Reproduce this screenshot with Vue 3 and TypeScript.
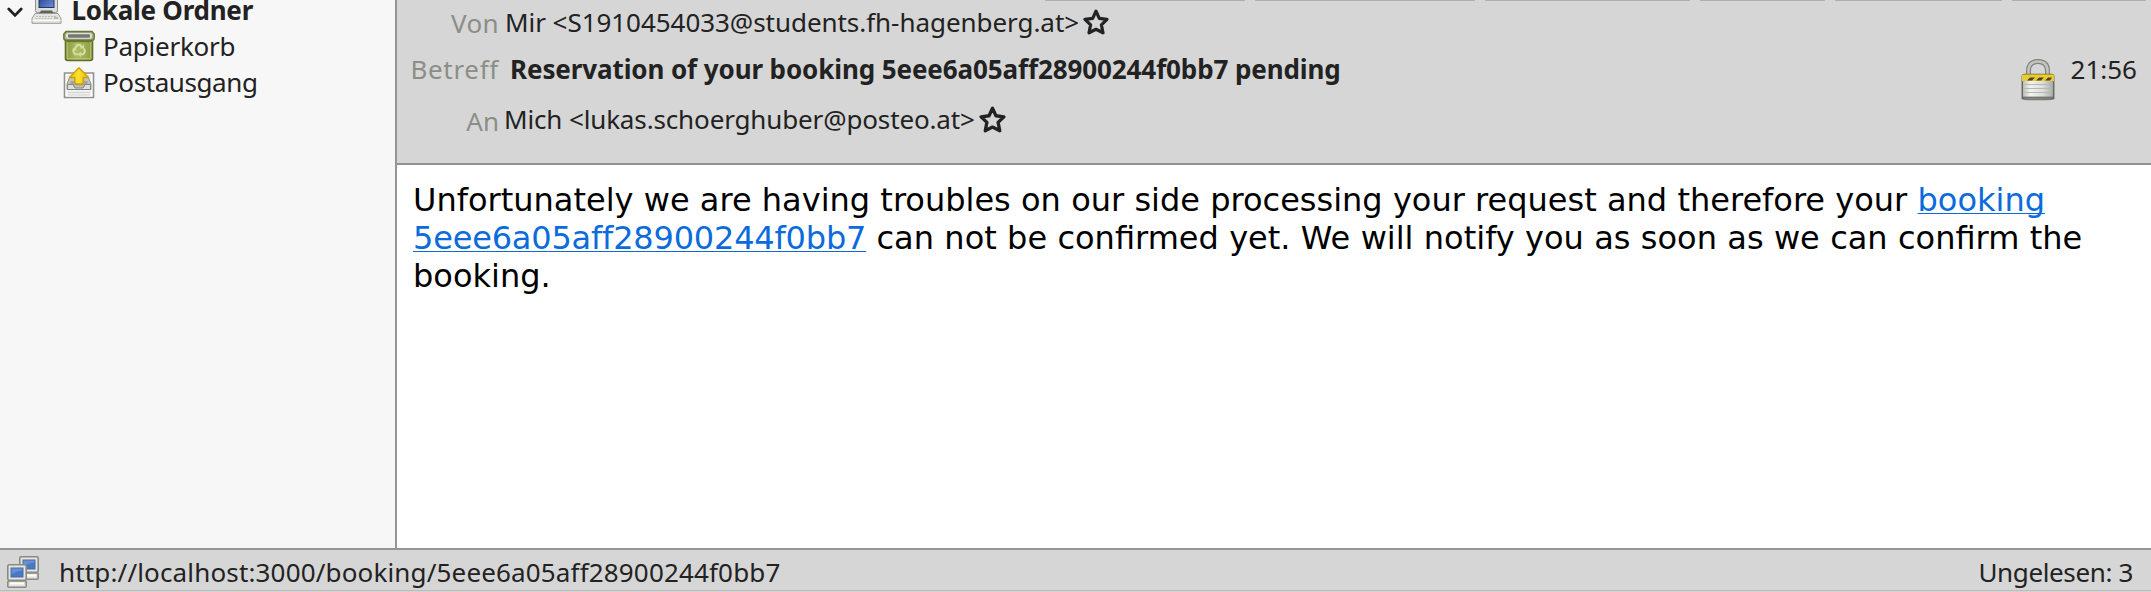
<script setup lang="ts">
const toolbarEdges: number[] = [200, 220, 205, 125, 167, 134]
const star = 'M13 2.2 L16.3 9.4 L24 10.4 L18.4 15.8 L20 23.8 L13 20.3 L6 23.8 L7.6 15.8 L2 10.4 L9.7 9.4 Z'
</script>

<template>
  <div class="window">
    <div class="main">
      <aside class="folders">
        <div class="row root">
          <svg class="chevron" width="16" height="12" viewBox="0 0 16 12">
            <path d="M1.8 2 L8 8.4 L14.2 2" fill="none" stroke="#222" stroke-width="2.8" stroke-linecap="round" stroke-linejoin="round" />
          </svg>
          <svg class="computer" width="32" height="32" viewBox="0 0 32 32">
            <defs>
              <linearGradient id="screen" x1="0" y1="0" x2="1" y2="1">
                <stop offset="0" stop-color="#1c3586" /><stop offset="1" stop-color="#6d91d6" />
              </linearGradient>
            </defs>
            <rect x="4.5" y="-2" width="22" height="22.5" rx="2" fill="#deded9" stroke="#8f908c" />
            <rect x="8" y="1" width="15" height="14.5" fill="url(#screen)" stroke="#23366f" />
            <path d="M10 18.5 H21 L23 22 H8Z" fill="#62635f" />
            <path d="M4 21.5 H27 L30 26.5 V31.3 H1 V26.5Z" fill="#e4e4e0" stroke="#9a9b97" />
            <path d="M5 24.5 H26 M4.5 26.5 H21" stroke="#bcbdb8" stroke-dasharray="2 1" />
            <path d="M1.5 28.3 H29.5" stroke="#fff" />
            <path d="M23 26 H27" stroke="#aaaba6" stroke-width="1.5" />
          </svg>
          <span class="root-name">Lokale Ordner</span>
        </div>
        <div class="row child">
          <svg width="32" height="32" viewBox="0 0 32 32">
            <defs>
              <linearGradient id="bin" x1="0" x2="1" y1="0" y2="0">
                <stop offset="0" stop-color="#8b9b42" /><stop offset=".45" stop-color="#afbd61" /><stop offset="1" stop-color="#8d9c45" />
              </linearGradient>
            </defs>
            <path d="M2.5 9 H29.5 V28.5 Q29.5 30.5 27 30.5 H5 Q2.5 30.5 2.5 28.5Z" fill="url(#bin)" stroke="#5d6c27" stroke-width="1.6" />
            <path d="M4.2 12 V28.7 H27.8 V12" fill="none" stroke="#bdc779" />
            <path d="M3 1.5 H29 L31.2 4 V8 Q31.2 10.2 29 10.2 H3 Q.8 10.2 .8 8 V4Z" fill="#a6b078" stroke="#66743a" stroke-width="1.4" />
            <rect x="3" y="3" width="26" height="5.7" rx="2" fill="#dce0dc" />
            <rect x="5" y="4.3" width="22" height="3.4" rx="1" fill="#717774" />
            <path d="M4 11.4 H28" stroke="#6b7930" stroke-width="1.6" />
            <g fill="none" stroke="#d3dea0" stroke-width="2">
              <path d="M12.1 18.4 L14.2 15.1 H17.2 L19 17.7" />
              <path d="M20.7 18.5 L22 21.2 L20.4 24.3 H17" />
              <path d="M14.8 24.3 H12 L10.2 21.3 L11.2 19.5" />
            </g>
            <path d="M16.5 18.5 H21 V14.5Z M17.9 21.5 V27 L14.8 24.3Z M9 19.2 L12.3 16.7 L13.7 20.8Z" fill="#d3dea0" />
          </svg>
          <span class="bin-name">Papierkorb</span>
        </div>
        <div class="row child">
          <svg class="outbox" width="32" height="32" viewBox="0 0 32 32">
            <defs>
              <linearGradient id="arrow" x1="0" x2="1" y1="0" y2="0">
                <stop offset="0" stop-color="#efc70c" /><stop offset=".5" stop-color="#fce030" /><stop offset="1" stop-color="#e6b800" />
              </linearGradient>
            </defs>
            <path d="M1.5 6 H30.5 V30.5 H1.5Z" fill="#f0f0ee" stroke="#91928e" stroke-width="1.6" />
            <path d="M3.2 7.5 H28.8 V29 H3.2Z" fill="none" stroke="#fff" />
            <path d="M7 9.5 H25 L28 17 V22.5 H4 V17Z" fill="#c1c2be" stroke="#92938e" />
            <path d="M7.5 14 H24.5 V18.5 H7.5Z" fill="#a3a49f" />
            <path d="M4.5 17.5 H10 L12 21 H20 L22 17.5 H27.5 V22.5 H4.5Z" fill="#dededb" stroke="#858681" />
            <path d="M5 25.5 H27 M5 28 H27" stroke="#d1d2ce" />
            <path d="M16 .8 L25.5 10.5 H20.2 V17 H11.8 V10.5 H6.5Z" fill="url(#arrow)" stroke="#cda006" stroke-width="1.3" stroke-linejoin="round" />
          </svg>
          <span class="out-name">Postausgang</span>
        </div>
      </aside>

      <section class="message">
        <header class="head">
          <div class="edges">
            <i v-for="(w, i) in toolbarEdges" :key="i" :style="{ width: w + 'px' }"></i>
          </div>
          <div class="field from">
            <span class="label von">Von</span>
            <span class="value sender">Mir &lt;S1910454033@students.fh-hagenberg.at&gt;</span>
            <svg class="star" width="26" height="26" viewBox="0 0 26 26"><path :d="star" fill="none" stroke="#222" stroke-width="3.2" stroke-linejoin="round" /></svg>
          </div>
          <div class="field subject-row">
            <span class="label betreff">Betreff</span>
            <span class="value subject">Reservation of your booking 5eee6a05aff28900244f0bb7 pending</span>
            <svg class="lock" width="36" height="44" viewBox="0 0 36 44">
              <defs>
                <linearGradient id="metal" x1="0" x2="1" y1="0" y2="0">
                  <stop offset="0" stop-color="#b9bab6" /><stop offset=".25" stop-color="#f2f2ef" /><stop offset=".65" stop-color="#deded9" /><stop offset="1" stop-color="#a7a8a4" />
                </linearGradient>
              </defs>
              <ellipse cx="18" cy="40.5" rx="17.5" ry="2.3" fill="#000" opacity=".14" />
              <path d="M8.5 19 V13 Q8.5 3.5 18 3.5 Q27.5 3.5 27.5 13 V19" fill="none" stroke="#80827c" stroke-width="5" />
              <path d="M8.5 19 V13 Q8.5 3.5 18 3.5 Q27.5 3.5 27.5 13 V19" fill="none" stroke="#c3c4c0" stroke-width="2.6" />
              <rect x="2.3" y="16.5" width="31.4" height="24.5" rx="2" fill="url(#metal)" stroke="#686964" stroke-width="1.5" />
              <path d="M4 26.5 H32 M4 30.5 H32 M4 34.5 H32" stroke="#b7b8b3" />
              <path d="M3 39.4 H33" stroke="#747570" stroke-width="1.6" />
              <rect x="2" y="16" width="32" height="7" fill="#e6cc35" />
              <path d="M2 16.5 H34" stroke="#b49b22" />
              <path d="M7 22.5 L10 19.5 H15 L12 22.5Z M16 22.5 L19 19.5 H24 L21 22.5Z M25 22.5 L28 19.5 H32 L30 22.5Z" fill="#4d461d" />
            </svg>
            <time class="time">21:56</time>
          </div>
          <div class="field to">
            <span class="label an">An</span>
            <span class="value recipient">Mich &lt;lukas.schoerghuber@posteo.at&gt;</span>
            <svg class="star" width="27" height="27" viewBox="0 0 26 26"><path :d="star" fill="none" stroke="#222" stroke-width="3.2" stroke-linejoin="round" /></svg>
          </div>
        </header>
        <article class="body">Unfortunately we are having troubles on our side processing your request and therefore your <a>booking <span class="hash">5eee6a05aff28900244f0bb7</span></a><span class="rest"> can not be confirmed yet. We will notify you as soon as we can confirm the booking.</span></article>
      </section>
    </div>

    <footer class="status">
      <svg class="network" width="32" height="32" viewBox="0 0 32 32">
        <g id="pc">
          <rect x="12.8" y=".8" width="18.4" height="15.4" rx="1.5" fill="#e5e6e1" stroke="#898b83" stroke-width="1.6" />
          <rect x="16" y="4" width="12" height="9" fill="#4a78c4" stroke="#4468ab" />
          <path d="M16.5 4.5 H27.5 V6.5 Q21 7 16.5 10Z" fill="#86a7dc" opacity=".5" />
          <rect x="12.8" y="17" width="18.4" height="6.2" rx="1" fill="#dfe0db" stroke="#898b83" stroke-width="1.6" />
          <path d="M15 19.5 H29" stroke="#fff" stroke-width="2" />
        </g>
        <use href="#pc" x="-12" y="8" />
      </svg>
      <span class="url">http://localhost:3000/booking/5eee6a05aff28900244f0bb7</span>
      <span class="unread">Ungelesen: 3</span>
    </footer>
  </div>
</template>

<style>
body { margin: 0; overflow: hidden; }
</style>

<style scoped>
.window {
  display: flex;
  flex-direction: column;
  width: 2151px;
  height: 592px;
  overflow: hidden;
  box-sizing: border-box;
  background: #fff;
  color: #222;
  font: 26px/36px "Noto Sans", sans-serif;
  white-space: nowrap;
}
svg { display: block; flex: none; }
.main { display: flex; height: 548px; }
.folders {
  box-sizing: border-box;
  width: 397px;
  flex: none;
  border-right: 2px solid #959595;
  background: #f7f7f7;
  overflow: hidden;
}
.row { display: flex; height: 36px; align-items: center; }
.root { margin-top: -8px; padding-left: 7px; font-weight: bold; }
.chevron { margin: 5px 8px 0 0; }
.computer { margin-top: -4px; }
.root-name { margin-left: 8.5px; letter-spacing: -0.24px; }
.child { padding-left: 63px; gap: 8px; }
.outbox { margin-top: 2px; }
.bin-name { letter-spacing: -0.24px; }
.out-name { letter-spacing: -0.41px; }

.message { display: flex; flex-direction: column; flex: 1; min-width: 0; }
.head {
  box-sizing: border-box;
  height: 165px;
  border-bottom: 2px solid #929292;
  background: #d6d6d6;
}
.edges { display: flex; gap: 10px; height: 1px; padding-left: 648px; }
.edges i { flex: none; height: 1px; background: #adadad; border-radius: 1px; }
.field { display: flex; align-items: flex-start; height: 36px; }
.from { margin-top: 3px; }
.subject-row { margin-top: 11px; }
.to { margin-top: 14px; }
.label { width: 102px; text-align: right; color: #8b8e88; flex: none; }
.von { letter-spacing: 0.4px; padding-top: 1px; }
.betreff { letter-spacing: 0.7px; }
.an { padding-top: 2px; }
.value { flex: none; }
.sender { margin-left: 6px; letter-spacing: -0.05px; }
.recipient { margin-left: 5px; letter-spacing: -0.14px; }
.subject { margin-left: 11px; font-weight: bold; letter-spacing: -0.1px; }
.star { margin: 5px 0 0 4px; }
.lock { margin: 7px 15px 0 auto; }
.time { margin-right: 14px; }

.body {
  padding: 16px 16px 0;
  color: #000;
  font: 32px/38px "DejaVu Sans", sans-serif;
  word-spacing: 0.07px;
  white-space: normal;
}
.body a { color: #0b6bdc; text-decoration: underline; text-decoration-thickness: 1px; text-underline-offset: 2px; text-decoration-skip-ink: none; }
.hash { letter-spacing: -0.19px; }
.rest { word-spacing: 0.17px; }

.status {
  display: flex;
  box-sizing: border-box;
  height: 44px;
  border-top: 2px solid #959595;
  padding: 4px 18px 0 7px;
  background: linear-gradient(#d6d6d6 40px, #bcbcbc 40px, #bcbcbc 41px, #d2d2d2 41px);
}
.network { margin-top: 2px; }
.url { margin-left: 20px; letter-spacing: 0.155px; }
.unread { margin-left: auto; letter-spacing: -0.36px; }
</style>
